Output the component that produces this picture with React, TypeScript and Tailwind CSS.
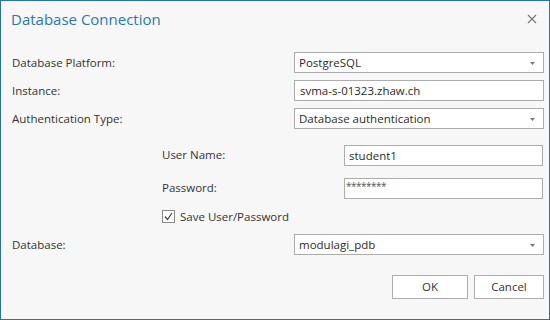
import React from "react";

const font = { fontFamily: '"Open Sans", "Noto Sans", sans-serif' };

const Arrow = () => (
  <svg width="5" height="3" viewBox="0 0 5 3" className="absolute right-[8px] top-[9px]">
    <path d="M0 0 H5 L2.5 3 Z" fill="#7a7a7a" />
  </svg>
);

const Select = ({ value }: { value: string }) => (
  <div className="relative w-[250px] h-[21px] border border-[#acacac] bg-white pl-[4px] text-[11.5px] leading-[19px] text-[#2b2b2b]">
    {value}
    <Arrow />
  </div>
);

const TextBox = ({ value, w, pl }: { value: string; w: string; pl: string }) => (
  <div className={`${w} ${pl} h-[21px] border border-[#acacac] bg-white text-[11.5px] leading-[19px] text-[#2b2b2b]`}>
    {value}
  </div>
);

const Label = ({ children }: { children: React.ReactNode }) => (
  <span className="text-[11.5px] text-[#333333]">{children}</span>
);

const App = () => {
  return (
    <div
      className="w-[550px] h-[320px] border border-[#2373b6] bg-[#f7f7f7] flex flex-col"
      style={font}
    >
      <div className="h-[36px] flex items-center justify-between pl-[10px] pr-[12px]">
        <h1 className="text-[15px] text-[#2a78b6]">Database Connection</h1>
        <svg width="10" height="10" viewBox="0 0 10 10">
          <path d="M1 1 L9 9 M9 1 L1 9" stroke="#777777" strokeWidth="1.1" />
        </svg>
      </div>

      <div className="flex flex-col pl-[11px] pr-[5px] pt-[15px]">
        <div className="flex items-center justify-between h-[21px]">
          <Label>Database Platform:</Label>
          <Select value="PostgreSQL" />
        </div>
        <div className="flex items-center justify-between h-[21px] mt-[7px]">
          <Label>Instance:</Label>
          <TextBox value="svma-s-01323.zhaw.ch" w="w-[250px]" pl="pl-[5px]" />
        </div>
        <div className="flex items-center justify-between h-[21px] mt-[7px]">
          <Label>Authentication Type:</Label>
          <Select value="Database authentication" />
        </div>

        <div className="flex flex-col pl-[150px] pr-[1px]">
          <div className="flex items-center justify-between h-[22px] mt-[15px]">
            <Label>User Name:</Label>
            <TextBox value="student1" w="w-[199px]" pl="pl-[4px]" />
          </div>
          <div className="flex items-center justify-between h-[22px] mt-[11px]">
            <Label>Password:</Label>
            <div className="w-[199px] h-[21px] border border-[#acacac] bg-white pl-[1px] text-[10px] leading-[15px] tracking-[-0.5px] text-[#555555]">
              ********
            </div>
          </div>
          <div className="flex items-center gap-[5px] mt-[10px] h-[15px]">
            <div className="w-[13px] h-[13px] border border-[#8a8a8a] bg-white flex items-center justify-center">
              <svg width="9" height="9" viewBox="0 0 9 9">
                <path d="M1 4.5 L3.5 7.5 L8 1" stroke="#444444" strokeWidth="1.2" fill="none" />
              </svg>
            </div>
            <Label>Save User/Password</Label>
          </div>
        </div>

        <div className="flex items-center justify-between h-[21px] mt-[10px]">
          <Label>Database:</Label>
          <Select value="modulagi_pdb" />
        </div>

        <div className="flex justify-end gap-[6px] mt-[20px]">
          <button className="shrink-0 w-[76px] h-[24px] border border-[#adadad] bg-white text-[11.5px] text-[#333333]">
            OK
          </button>
          <button className="shrink-0 w-[70px] h-[24px] border border-[#adadad] bg-white text-[11.5px] text-[#333333]">
            Cancel
          </button>
        </div>
      </div>
    </div>
  );
};

export default App;
